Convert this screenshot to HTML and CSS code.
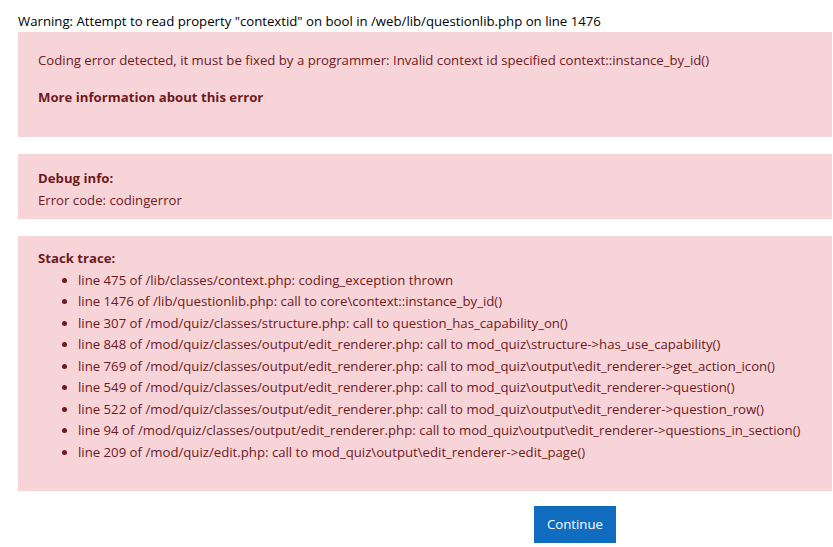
FILE: index.html
```html
<!DOCTYPE html>
<html lang="en">
<head>
	<meta charset="UTF-8">
	<title>Error</title>
	<link rel="stylesheet" href="styles.css">
</head>
<body>
	<div class="page">
		<div class="warning">Warning: Attempt to read property "contextid" on bool in /web/lib/questionlib.php on line 1476</div>

		<div class="alert alert-first">
			<p>Coding error detected, it must be fixed by a programmer: Invalid context id specified context::instance_by_id()</p>
			<p class="strong">More information about this error</p>
		</div>

		<div class="alert alert-debug">
			<div class="strong">Debug info:</div>
			<div>Error code: codingerror</div>
		</div>

		<div class="alert alert-trace">
			<div class="strong">Stack trace:</div>
			<ul>
				<li>line 475 of /lib/classes/context.php: coding_exception thrown</li>
				<li>line 1476 of /lib/questionlib.php: call to core\context::instance_by_id()</li>
				<li>line 307 of /mod/quiz/classes/structure.php: call to question_has_capability_on()</li>
				<li>line 848 of /mod/quiz/classes/output/edit_renderer.php: call to mod_quiz\structure-&gt;has_use_capability()</li>
				<li>line 769 of /mod/quiz/classes/output/edit_renderer.php: call to mod_quiz\output\edit_renderer-&gt;get_action_icon()</li>
				<li>line 549 of /mod/quiz/classes/output/edit_renderer.php: call to mod_quiz\output\edit_renderer-&gt;question()</li>
				<li>line 522 of /mod/quiz/classes/output/edit_renderer.php: call to mod_quiz\output\edit_renderer-&gt;question_row()</li>
				<li>line 94 of /mod/quiz/classes/output/edit_renderer.php: call to mod_quiz\output\edit_renderer-&gt;questions_in_section()</li>
				<li>line 209 of /mod/quiz/edit.php: call to mod_quiz\output\edit_renderer-&gt;edit_page()</li>
			</ul>
		</div>

		<div class="continue">
			<button>Continue</button>
		</div>
	</div>
</body>
</html>
```

FILE: styles.css
```css
body {
	margin: 0;
	font-family: "Open Sans", "Noto Sans", sans-serif;
	font-size: 13.2px;
	line-height: 21.5px;
	color: #1d2125;
	background: white;
}
.page {
	padding: 11px 1px 0 18px;
}
.warning {
	color: #000;
	line-height: 21px;
}
.alert {
	background-color: #f7d4d7;
	color: #6e1a1f;
	padding: 14px 20px 8px;
	margin-bottom: 17px;
}
.alert p {
	margin: 0 0 15px;
}
.alert-first {
	padding: 18px 20px 15px;
}
.alert-first p:last-child {
	margin-bottom: 14px;
}
.alert-trace {
	padding: 12px 20px 13px;
	margin-bottom: 15px;
}
.alert ul {
	margin: 0 0 15px;
	padding-left: 40px;
}
.strong {
	font-weight: bold;
}
.continue {
	padding-left: 516px;
}
.continue button {
	font-family: inherit;
	font-size: inherit;
	line-height: 21px;
	background-color: #0f6cbf;
	color: white;
	border: none;
	padding: 8px 13px;
	cursor: pointer;
}
```
